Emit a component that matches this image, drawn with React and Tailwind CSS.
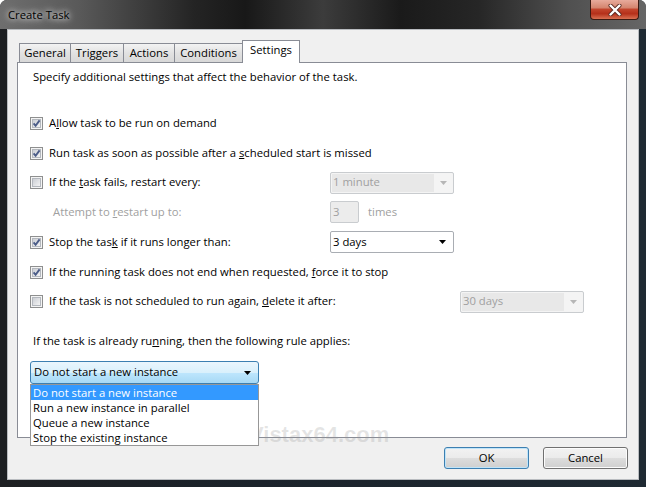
import React from "react";

function Check({ checked }) {
  return (
    <svg width="13" height="13" viewBox="0 0 13 13" className="shrink-0">
      <defs>
        <linearGradient id="cbg" x1="0" y1="0" x2="1" y2="1">
          <stop offset="0" stopColor="#c9ccd2" />
          <stop offset="1" stopColor="#f6f6f6" />
        </linearGradient>
      </defs>
      <rect x="0.5" y="0.5" width="12" height="12" fill="#f4f4f4" stroke="#8e8f8f" />
      <rect x="2.5" y="2.5" width="8" height="8" fill="url(#cbg)" stroke="#b4b8be" />
      {checked && (
        <path d="M3.6 6.4 L5.6 8.8 L9.6 3.4" fill="none" stroke="#4b5c88" strokeWidth="1.9" />
      )}
    </svg>
  );
}

function Arrow({ color }) {
  return (
    <svg width="7" height="4" viewBox="0 0 7 4" className="shrink-0">
      <polygon points="0,0 7,0 3.5,4" fill={color} />
    </svg>
  );
}

function Combo({ text, disabled }) {
  if (disabled) {
    return (
      <div className="flex h-[22px] w-[124px] items-center rounded-[2px] border border-[#c9cccf] bg-[#f4f4f4] p-[1px]">
        <div className="flex h-full flex-1 items-center bg-[#e8e8e8] pl-[1px] text-[#a0a0a0]">{text}</div>
        <div className="flex w-[18px] items-center justify-center">
          <Arrow color="#b6b6b6" />
        </div>
      </div>
    );
  }
  return (
    <div className="flex h-[22px] w-[124px] items-center rounded-[2px] border border-[#a9adb3] bg-white pl-[2px]">
      <div className="flex-1 text-black">{text}</div>
      <div className="flex w-[22px] items-center justify-center">
        <Arrow color="#000" />
      </div>
    </div>
  );
}

function Label({ children }) {
  return <span className="ml-[6px] whitespace-nowrap">{children}</span>;
}

export default function App() {
  return (
    <div className="relative h-[487px] w-[646px] overflow-hidden bg-white font-['Open_Sans',sans-serif] text-[11.3px] text-black">
      <div className="flex h-[487px] w-[646px] flex-col rounded-t-[7px] bg-[linear-gradient(90deg,#1d1f22,#1b232b_40%,#1f2a33)] px-[7px] pb-[7px]">
        {/* title bar */}
        <div className="-mx-[7px] flex h-[29px] shrink-0 items-start justify-between rounded-t-[7px] bg-[linear-gradient(90deg,#6e6e6e_0%,#5a5a5a_12%,#242424_30%,#181818_38%,#3c3c3c_50%,#1a1a1a_62%,#262626_74%,#505050_88%,#666666_100%)]">
          <div className="pl-[8px] pt-[7px] text-[11.3px] text-black [text-shadow:0_0_8px_#fff,0_0_5px_#ddd]">
            Create Task
          </div>
          <div className="mr-[7px] flex h-[20px] w-[49px] items-center justify-center rounded-b-[4px] border border-t-0 border-[#3b1a12] bg-[linear-gradient(#e8ab9c_0%,#d58670_40%,#c2442c_50%,#b5301a_72%,#d97052_100%)]">
            <svg width="14" height="12" viewBox="0 0 14 12">
              <path d="M2.5 1.5 L11.5 10.5 M11.5 1.5 L2.5 10.5" stroke="#5a2a22" strokeWidth="4" strokeLinecap="round" />
              <path d="M2.5 1.5 L11.5 10.5 M11.5 1.5 L2.5 10.5" stroke="#fff" strokeWidth="2.4" strokeLinecap="round" />
            </svg>
          </div>
        </div>

        {/* client area */}
        <div className="flex flex-1 flex-col border border-[#b9bcc0] bg-[#f0f0f0] pt-[10px]">
          {/* tabs */}
          <div className="ml-[11px] flex h-[22px] items-end">
            {[
              ["General", "w-[52px]"],
              ["Triggers", "w-[54px]"],
              ["Actions", "w-[52px]"],
              ["Conditions", "w-[69px]"],
            ].map(([t, w]) => (
              <div
                key={t}
                className={`${w} -mr-px flex h-[19px] items-center justify-center border border-b-0 border-[#898c95] bg-[linear-gradient(#f3f3f3,#e2e2e2_50%,#d8d8d8)] leading-none`}
              >
                {t}
              </div>
            ))}
            <div className="relative z-10 -mb-px flex h-[23px] w-[58px] items-start justify-center border border-b-0 border-[#898c95] bg-white pt-[3px] leading-none">
              Settings
            </div>
          </div>

          {/* panel */}
          <div className="relative ml-[9px] flex h-[376px] w-[610px] flex-col border border-[#898c95] bg-white">
            <div className="flex h-[28px] items-center pl-[15px]">
              Specify additional settings that affect the behavior of the task.
            </div>
            <div className="h-[17px]" />

            <div className="flex h-[30px] items-center pl-[12px]">
              <Check checked />
              <Label>
                A<u>l</u>low task to be run on demand
              </Label>
            </div>
            <div className="flex h-[30px] items-center pl-[12px]">
              <Check checked />
              <Label>
                Run task as soon as possible after a <u>s</u>cheduled start is missed
              </Label>
            </div>
            <div className="grid h-[29px] grid-cols-[300px_1fr] items-center pl-[12px]">
              <div className="flex items-center">
                <Check />
                <Label>
                  If the <u>t</u>ask fails, restart every:
                </Label>
              </div>
              <Combo text="1 minute" disabled />
            </div>
            <div className="grid h-[30px] grid-cols-[300px_1fr] items-center pl-[12px]">
              <div className="pl-[23px] text-[#a0a0a0]">
                Attempt to <u>r</u>estart up to:
              </div>
              <div className="flex items-center">
                <div className="flex h-[22px] w-[29px] items-center rounded-[2px] border border-[#c9cccf] bg-[#ececec] pl-[2px] text-[#a0a0a0]">
                  3
                </div>
                <span className="ml-[9px] text-[#a0a0a0]">times</span>
              </div>
            </div>
            <div className="grid h-[30px] grid-cols-[300px_1fr] items-center pl-[12px]">
              <div className="flex items-center">
                <Check checked />
                <Label>
                  Stop the tas<u>k</u> if it runs longer than:
                </Label>
              </div>
              <Combo text="3 days" />
            </div>
            <div className="flex h-[30px] items-center pl-[12px]">
              <Check checked />
              <Label>
                If the running task does not end when requested, <u>f</u>orce it to stop
              </Label>
            </div>
            <div className="grid h-[29px] grid-cols-[430px_1fr] items-center pl-[12px]">
              <div className="flex items-center">
                <Check />
                <Label>
                  If the task is not scheduled to run again, <u>d</u>elete it after:
                </Label>
              </div>
              <Combo text="30 days" disabled />
            </div>

            <div className="mt-[15px] flex h-[20px] items-center pl-[15px]">
              If the task is already ru<u>n</u>ning, then the following rule applies:
            </div>
            <div className="relative ml-[12px] mt-[10px] w-[229px]">
              <div className="flex h-[23px] items-center rounded-[3px] border border-[#3c7fb1] bg-[linear-gradient(#eaf6fd_0%,#d9f0fc_50%,#bee6fd_51%,#a7d9f5_100%)] pl-[3px] pr-[7px]">
                <span className="flex-1">Do not start a new instance</span>
                <Arrow color="#000" />
              </div>
              <div className="absolute left-0 top-[23px] z-20 w-[229px] border border-[#979797] bg-white">
                <div className="h-[15px] bg-[#3399ff] pl-[2px] leading-[15px] text-white">
                  Do not start a new instance
                </div>
                <div className="h-[15px] pl-[2px] leading-[15px]">Run a new instance in parallel</div>
                <div className="h-[15px] pl-[2px] leading-[15px]">Queue a new instance</div>
                <div className="h-[15px] pl-[2px] leading-[15px]">Stop the existing instance</div>
              </div>
            </div>
          </div>

          {/* buttons */}
          <div className="mr-[10px] mt-[9px] flex justify-end gap-[14px]">
            <div className="flex h-[22px] w-[85px] items-center justify-center rounded-[3px] border border-[#3c7fb1] bg-[linear-gradient(#f2f2f2_0%,#ebebeb_50%,#dddddd_51%,#cfcfcf_100%)] shadow-[inset_0_0_0_1px_#bfe4f9]">
              OK
            </div>
            <div className="flex h-[22px] w-[85px] items-center justify-center rounded-[3px] border border-[#707070] bg-[linear-gradient(#f2f2f2_0%,#ebebeb_50%,#dddddd_51%,#cfcfcf_100%)] shadow-[inset_0_0_0_1px_#fcfcfc]">
              Cancel
            </div>
          </div>
        </div>
      </div>

      {/* watermark */}
      <div className="pointer-events-none absolute left-[249px] top-[424px] z-10 font-['Liberation_Sans',sans-serif] text-[22px] font-bold leading-none text-[rgba(150,150,150,0.25)]">
        Vistax64.com
      </div>
    </div>
  );
}
